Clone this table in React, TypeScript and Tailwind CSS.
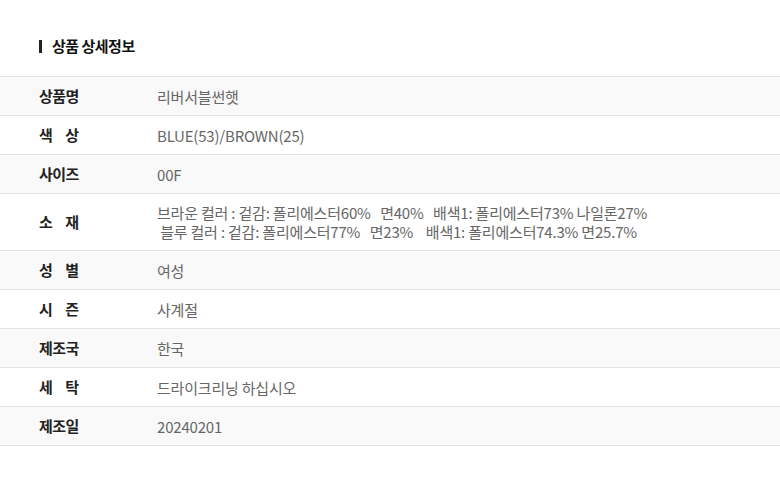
const rows: { label: string; value: string[]; spaced?: boolean }[] = [
  { label: '상품명', value: ['리버서블썬햇'] },
  { label: '색상', value: ['BLUE(53)/BROWN(25)'], spaced: true },
  { label: '사이즈', value: ['00F'] },
  {
    label: '소재',
    spaced: true,
    value: [
      '브라운 컬러 : 겉감: 폴리에스터60%   면40%   배색1: 폴리에스터73% 나일론27%',
      ' 블루 컬러 : 겉감: 폴리에스터77%   면23%    배색1: 폴리에스터74.3% 면25.7%',
    ],
  },
  { label: '성별', value: ['여성'], spaced: true },
  { label: '시즌', value: ['사계절'], spaced: true },
  { label: '제조국', value: ['한국'] },
  { label: '세탁', value: ['드라이크리닝 하십시오'], spaced: true },
  { label: '제조일', value: ['20240201'] },
];

export default function App() {
  return (
    <div
      className="w-[780px] h-[484px] bg-white text-[15px]"
      style={{ fontFamily: '"Noto Sans CJK KR", "Noto Sans", sans-serif' }}
    >
      <div className="h-[76px] flex items-center pl-[39px] pt-[17px]">
        <span className="w-[3px] h-[13px] bg-[#222]" />
        <h2 className="ml-[10px] font-bold text-[15px] text-[#111] tracking-[-0.5px]">상품 상세정보</h2>
      </div>

      <div className="border-t border-[#e3e3e3]">
        {rows.map((row, i) => (
          <div
            key={row.label}
            className={`flex items-center border-b border-[#e3e3e3] ${
              row.value.length > 1 ? 'h-[57px]' : 'h-[39px]'
            } ${i % 2 === 0 ? 'bg-[#f9f9f9]' : 'bg-white'}`}
          >
            <div className="w-[157px] pl-[39px] shrink-0">
              {row.spaced ? (
                <div className="w-[40px] flex justify-between font-bold text-[#222]">
                  {row.label.split('').map((ch, j) => (
                    <span key={j}>{ch}</span>
                  ))}
                </div>
              ) : (
                <span className="font-bold text-[#222] tracking-[-0.5px]">{row.label}</span>
              )}
            </div>
            <div className="font-normal text-[#666] leading-[19px] tracking-[-0.2px]">
              {row.value.map((line, j) => (
                <div key={j} className="whitespace-pre">
                  {line}
                </div>
              ))}
            </div>
          </div>
        ))}
      </div>
    </div>
  );
}
